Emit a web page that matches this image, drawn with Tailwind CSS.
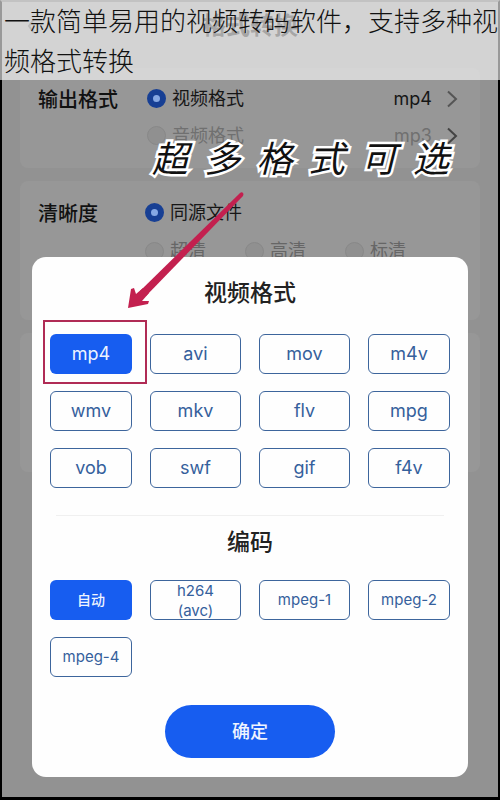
<!DOCTYPE html>
<html lang="zh-CN">
  <head>
    <meta charset="UTF-8" />
    <meta name="viewport" content="width=device-width, initial-scale=1.0" />
    <title>格式转换</title>
    <script src="https://cdn.jsdelivr.net/npm/@tailwindcss/browser@4"></script>
  </head>

  <body class="font-['Inter','Noto_Sans_CJK_SC',sans-serif]">
    <div class="relative min-h-screen border-x-2 border-t-2 border-b-3 border-x-black border-b-black border-t-[#666] bg-[#929292] overflow-hidden">
      <!-- Page header -->
      <header class="relative h-[66px] flex justify-center">
        <a href="#" aria-label="返回" class="absolute left-6 top-3.5 text-[#555]">
          <svg class="w-3 h-5" viewBox="0 0 12 20" fill="none" stroke="currentColor" stroke-width="2"><path d="M8 3 3 10l5 7" /></svg>
        </a>
        <h1 class="h-12 leading-12 text-2xl font-bold text-[#222]">格式转换</h1>
      </header>

      <main class="px-[18px] flex flex-col gap-[13px]">
        <!-- Output format -->
        <section class="flex rounded-lg bg-[#979797] pt-3 pb-3.5 pl-[18px] pr-[22px]">
          <h2 class="w-[109px] h-10 leading-10 shrink-0 text-xl font-medium text-[#111]">输出格式</h2>
          <div class="flex-1 text-lg">
            <div class="flex items-center h-[37px] text-[#161616]">
              <input id="video" type="radio" name="kind" checked class="appearance-none size-[19px] rounded-full border-[6px] border-[#173f94] bg-[#86a8e4]" />
              <label for="video" class="flex-1 ml-1.5">视频格式</label>
              <span class="mr-3.5">mp4</span>
              <svg class="w-3 h-5 text-[#555]" viewBox="0 0 12 20" fill="none" stroke="currentColor" stroke-width="2"><path d="M2 2.500l8 7.500-8 7.500" /></svg>
            </div>
            <div class="flex items-center h-[37px] text-[#707070]">
              <input id="audio" type="radio" name="kind" class="appearance-none size-[19px] rounded-full border border-[#888] bg-[#909090]" />
              <label for="audio" class="flex-1 ml-1.5">音频格式</label>
              <span class="mr-3.5">mp3</span>
              <svg class="w-3 h-5 text-[#444]" viewBox="0 0 12 20" fill="none" stroke="currentColor" stroke-width="2"><path d="M2 2.500l8 7.500-8 7.500" /></svg>
            </div>
          </div>
        </section>

        <!-- Definition -->
        <section class="flex rounded-lg bg-[#979797] pt-[13px] h-[139px] pl-[18px] pr-5">
          <h2 class="w-[107px] h-10 leading-10 shrink-0 text-xl font-medium text-[#111]">清晰度</h2>
          <div class="flex-1 text-lg">
            <div class="flex items-center h-[37px] text-[#161616]">
              <input id="same" type="radio" name="quality" checked class="appearance-none size-[19px] rounded-full border-[6px] border-[#173f94] bg-[#86a8e4]" />
              <label for="same" class="ml-1.5">同源文件</label>
            </div>
            <div class="flex items-center h-10 text-[#666]">
              <div class="w-[100px] flex items-center">
                <input id="super" type="radio" name="quality" class="appearance-none size-[19px] rounded-full border border-[#888] bg-[#909090]" />
                <label for="super" class="ml-1.5">超清</label>
              </div>
              <div class="w-[100px] flex items-center">
                <input id="high" type="radio" name="quality" class="appearance-none size-[19px] rounded-full border border-[#888] bg-[#909090]" />
                <label for="high" class="ml-1.5">高清</label>
              </div>
              <div class="w-[100px] flex items-center">
                <input id="standard" type="radio" name="quality" class="appearance-none size-[19px] rounded-full border border-[#888] bg-[#909090]" />
                <label for="standard" class="ml-1.5">标清</label>
              </div>
            </div>
          </div>
        </section>

        <section class="rounded-lg bg-[#979797] h-[139px]"></section>
      </main>

      <!-- Format dialog -->
      <div role="dialog" aria-label="视频格式" class="absolute inset-x-[30px] top-[255px] rounded-[14px] bg-[#fefefe] px-[18px] pt-4 pb-[19px]">
        <h2 class="h-10 leading-10 text-center text-[23px] font-medium text-[#222]">视频格式</h2>
        <div class="mt-[21px] grid grid-cols-[82fr_91fr_91fr_82fr] gap-x-[18px] gap-y-[17px] text-lg text-[#35609c]">
          <button class="h-10 rounded-md bg-[#175df0] text-[#eef4ff]">mp4</button>
          <button class="h-10 rounded-md border border-[#3d659c]">avi</button>
          <button class="h-10 rounded-md border border-[#3d659c]">mov</button>
          <button class="h-10 rounded-md border border-[#3d659c]">m4v</button>
          <button class="h-10 rounded-md border border-[#3d659c]">wmv</button>
          <button class="h-10 rounded-md border border-[#3d659c]">mkv</button>
          <button class="h-10 rounded-md border border-[#3d659c]">flv</button>
          <button class="h-10 rounded-md border border-[#3d659c]">mpg</button>
          <button class="h-10 rounded-md border border-[#3d659c]">vob</button>
          <button class="h-10 rounded-md border border-[#3d659c]">swf</button>
          <button class="h-10 rounded-md border border-[#3d659c]">gif</button>
          <button class="h-10 rounded-md border border-[#3d659c]">f4v</button>
        </div>

        <hr class="mt-[27px] mx-1.5 border-[#f0f0f0]" />

        <h2 class="mt-1.5 h-10 leading-10 text-center text-[23px] font-medium text-[#222]">编码</h2>
        <div class="mt-[18px] grid grid-cols-[82fr_91fr_91fr_82fr] gap-x-[18px] gap-y-[17px] text-[15px] text-[#35609c]">
          <button class="h-10 rounded-md bg-[#175df0] text-sm font-medium text-[#eef4ff]">自动</button>
          <button class="h-10 rounded-md border border-[#3d659c] px-4 leading-5">h264 (avc)</button>
          <button class="h-10 rounded-md border border-[#3d659c]">mpeg-1</button>
          <button class="h-10 rounded-md border border-[#3d659c]">mpeg-2</button>
          <button class="h-10 rounded-md border border-[#3d659c]">mpeg-4</button>
        </div>

        <button class="block mx-auto mt-7 w-[170px] h-[53px] rounded-full bg-[#175df0] text-lg font-medium text-[#eef4ff]">确定</button>
      </div>

      <!-- Tutorial marks over the dialog -->
      <div class="absolute left-[41px] top-[318px] w-[104px] h-16 border-2 border-[#b02b55]"></div>
      <svg class="absolute left-[120px] top-[182px] w-[130px] h-[130px]" viewBox="0 0 130 130" fill="#c3204f">
        <path d="M117.500 9.500 Q120.500 7 121.500 10 L121 12 L24 112 L18 107 Z" />
        <path d="M6 124 L9 105 L12 104 L14 110 L21 104 L27 109 L20 117 L27 117 L26 120 Z" />
      </svg>
      <p class="absolute left-[150px] top-[129px] w-[297px] flex justify-between text-[36px] leading-14 italic text-[#111] [-webkit-text-stroke:5px_white] [paint-order:stroke_fill]">
        <span>超</span><span>多</span><span>格</span><span>式</span><span>可</span><span>选</span>
      </p>
    </div>

    <!-- Caption -->
    <p class="absolute inset-x-0 top-0 h-20 pl-1 pr-0.5 bg-white/60 text-[26px] leading-10 font-light break-all text-[#111] font-['Noto_Sans_CJK_SC',sans-serif]">一款简单易用的视频转码软件，支持多种视频格式转换</p>
  </body>
</html>
